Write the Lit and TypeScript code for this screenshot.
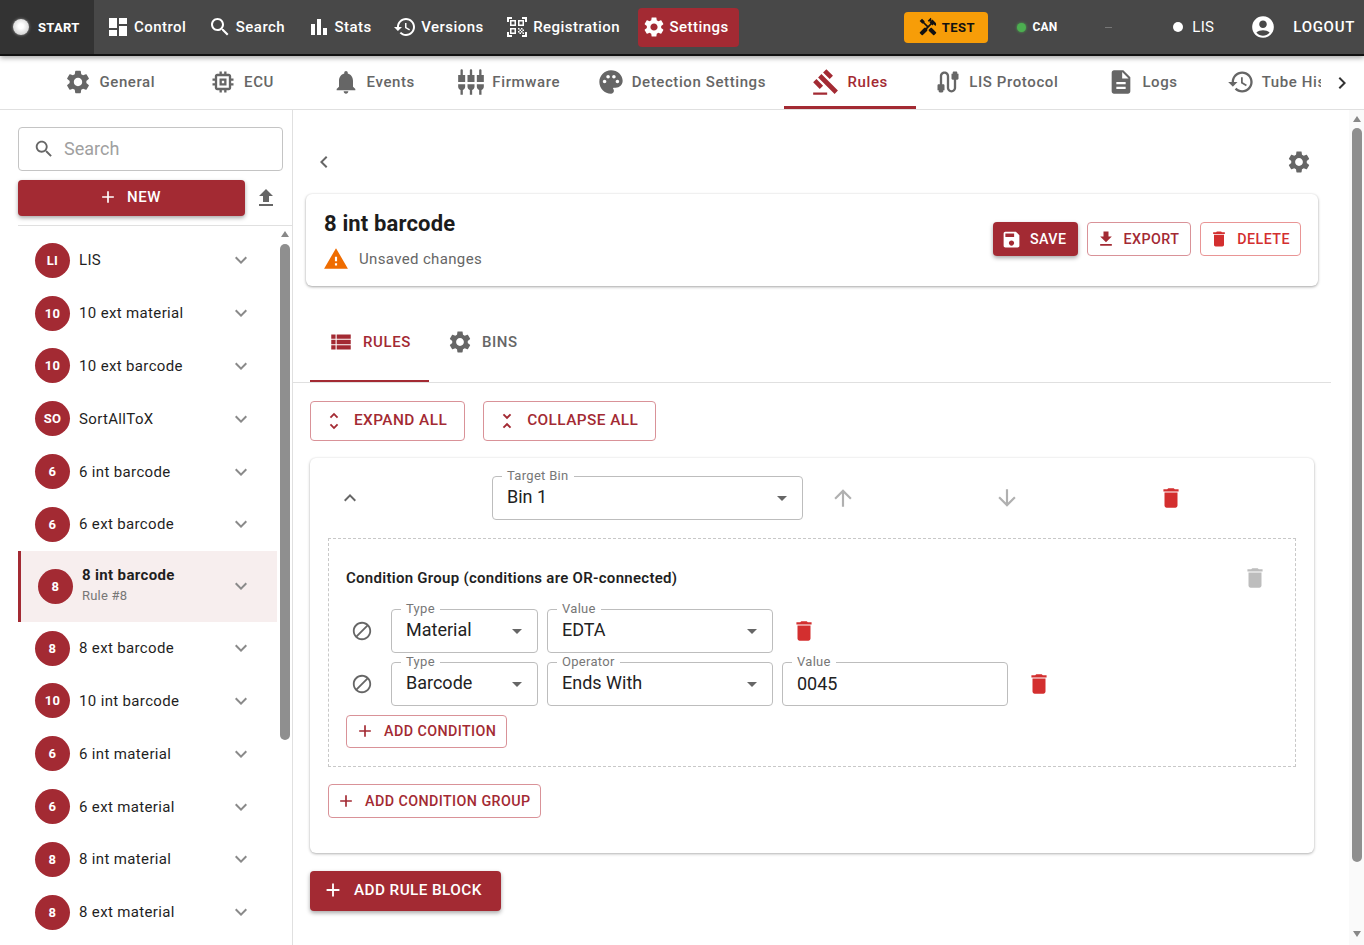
import { LitElement, html, css } from "lit";
import { customElement } from "lit/decorators.js";

const P = {
  gear: "M19.14 12.94c.04-.3.06-.61.06-.94 0-.32-.02-.64-.07-.94l2.03-1.58c.18-.14.23-.41.12-.61l-1.92-3.32c-.12-.22-.37-.29-.59-.22l-2.39.96c-.5-.38-1.03-.7-1.62-.94l-.36-2.54c-.04-.24-.24-.41-.48-.41h-3.84c-.24 0-.43.17-.47.41l-.36 2.54c-.59.24-1.13.57-1.62.94l-2.39-.96c-.22-.08-.47 0-.59.22L2.74 8.87c-.12.21-.08.47.12.61l2.03 1.58c-.05.3-.09.63-.09.94s.02.64.07.94l-2.03 1.58c-.18.14-.23.41-.12.61l1.92 3.32c.12.22.37.29.59.22l2.39-.96c.5.38 1.03.7 1.62.94l.36 2.54c.05.24.24.41.48.41h3.84c.24 0 .44-.17.47-.41l.36-2.54c.59-.24 1.13-.56 1.62-.94l2.39.96c.22.08.47 0 .59-.22l1.92-3.32c.12-.22.07-.47-.12-.61l-2.01-1.58zM12 15.6c-1.98 0-3.6-1.62-3.6-3.6s1.62-3.6 3.6-3.6 3.6 1.62 3.6 3.6-1.62 3.6-3.6 3.6z",
  dash: "M3 13h8V3H3v10zm0 8h8v-6H3v6zm10 0h8V11h-8v10zm0-18v6h8V3h-8z",
  search: "M15.5 14h-.79l-.28-.27C15.41 12.59 16 11.11 16 9.5 16 5.91 13.09 3 9.5 3S3 5.91 3 9.5 5.91 16 9.5 16c1.61 0 3.09-.59 4.23-1.57l.27.28v.79l5 4.99L20.49 19l-4.99-5zm-6 0C7.01 14 5 11.99 5 9.5S7.01 5 9.5 5 14 7.01 14 9.5 11.99 14 9.5 14z",
  bars: "M4 9h4v11H4zM16 13h4v7h-4zM10 4h4v16h-4z",
  history: "M13 3c-4.97 0-9 4.03-9 9H1l3.89 3.89.07.14L9 12H6c0-3.87 3.13-7 7-7s7 3.13 7 7-3.13 7-7 7c-1.93 0-3.68-.79-4.94-2.06l-1.42 1.42C8.27 19.99 10.51 21 13 21c4.97 0 9-4.03 9-9s-4.03-9-9-9zm-1 5v5l4.28 2.54.72-1.21-3.5-2.08V8H12z",
  qr: "M9.5 6.5v3h-3v-3h3M11 5H5v6h6V5zm-1.5 9.5v3h-3v-3h3M11 13H5v6h6v-6zm6.5-6.5v3h-3v-3h3M19 5h-6v6h6V5zm-6 8h1.5v1.5H13V13zm1.5 1.5H16V16h-1.5v-1.5zM16 13h1.5v1.5H16V13zm-3 3h1.5v1.5H13V16zm1.5 1.5H16V19h-1.5v-1.5zM16 16h1.5v1.5H16V16zm1.5-1.5H19V16h-1.5v-1.5zm0 3H19V19h-1.5v-1.5zM22 7h-2V4h-3V2h5v5zm0 15v-5h-2v3h-3v2h5zM2 22h5v-2H4v-3H2v5zM2 2v5h2V4h3V2H2z",
  handy: "m21.67 18.17-5.3-5.3h-.99l-2.54 2.54v.99l5.3 5.3c.39.39 1.02.39 1.41 0l2.12-2.12c.39-.38.39-1.02 0-1.41zM17.34 10.19l1.41-1.41 2.12 2.12c1.17-1.17 1.17-3.07 0-4.24l-3.54-3.54-1.41 1.41V1.71l-.7-.71-3.54 3.54.71.71h2.83l-1.41 1.41 1.06 1.06-2.89 2.89-4.13-4.13V5.06L4.83 2.04 2 4.87 5.03 7.9h1.41l4.13 4.13-.85.85H7.6l-5.3 5.3c-.39.39-.39 1.02 0 1.41l2.12 2.12c.39.39 1.02.39 1.41 0l5.3-5.3v-2.12l5.15-5.15 1.06 1.05z",
  account: "M12 2C6.48 2 2 6.48 2 12s4.48 10 10 10 10-4.48 10-10S17.52 2 12 2zm0 4c1.93 0 3.5 1.57 3.5 3.5S13.93 13 12 13s-3.5-1.57-3.5-3.5S10.07 6 12 6zm0 14c-2.03 0-4.43-.82-6.14-2.88C7.55 15.8 9.68 15 12 15s4.45.8 6.14 2.12C16.43 19.18 14.03 20 12 20z",
  memory: "M15 9H9v6h6V9zm-2 4h-2v-2h2v2zm8-2V9h-2V7c0-1.1-.9-2-2-2h-2V3h-2v2h-2V3H9v2H7c-1.1 0-2 .9-2 2v2H3v2h2v2H3v2h2v2c0 1.1.9 2 2 2h2v2h2v-2h2v2h2v-2h2c1.1 0 2-.9 2-2v-2h2v-2h-2v-2h2zm-4 6H7V7h10v10z",
  bell: "M12 22c1.1 0 2-.9 2-2h-4c0 1.1.89 2 2 2zm6-6v-5c0-3.07-1.64-5.64-4.5-6.32V4c0-.83-.67-1.5-1.5-1.5s-1.5.67-1.5 1.5v.68C7.63 5.36 6 7.92 6 11v5l-2 2v1h16v-1l-2-2z",
  composite: "M5 2c0-.55-.45-1-1-1s-1 .45-1 1v4H1v6h6V6H5V2zm4 14c0 1.3.84 2.4 2 2.82V23h2v-4.18c1.16-.41 2-1.51 2-2.82v-2H9v2zm-8 0c0 1.3.84 2.4 2 2.82V23h2v-4.18C6.16 18.4 7 17.3 7 16v-2H1v2zM21 6V2c0-.55-.45-1-1-1s-1 .45-1 1v4h-2v6h6V6h-2zm-8-4c0-.55-.45-1-1-1s-1 .45-1 1v4H9v6h6V6h-2V2zm4 14c0 1.3.84 2.4 2 2.82V23h2v-4.18c1.16-.41 2-1.51 2-2.82v-2h-6v2z",
  palette: "M12 2C6.49 2 2 6.49 2 12s4.49 10 10 10c1.38 0 2.5-1.12 2.5-2.5 0-.61-.23-1.2-.64-1.67-.08-.1-.13-.21-.13-.33 0-.28.22-.5.5-.5H16c3.31 0 6-2.69 6-6 0-4.96-4.49-9-10-9zm5.5 11c-.83 0-1.5-.67-1.5-1.5s.67-1.5 1.5-1.5 1.5.67 1.5 1.5-.67 1.5-1.5 1.5zm-3-4c-.83 0-1.5-.67-1.5-1.5S13.67 6 14.5 6s1.5.67 1.5 1.5S15.33 9 14.5 9zM5 11.5c0-.83.67-1.5 1.5-1.5s1.5.67 1.5 1.5S7.33 13 6.5 13 5 12.33 5 11.5zm6-4c0 .83-.67 1.5-1.5 1.5S8 8.33 8 7.5 8.67 6 9.5 6s1.5.67 1.5 1.5z",
  gavel: "M1 21h12v2H1v-2zM5.245 8.07l2.83-2.827 14.14 14.142-2.828 2.828L5.245 8.07zM12.32 1l5.657 5.656-2.83 2.83-5.654-5.66L12.32 1zM3.825 9.485l5.657 5.657-2.828 2.828-5.657-5.657 2.828-2.828z",
  cable: "M20 5V4c0-.55-.45-1-1-1h-2c-.55 0-1 .45-1 1v1h-1v4c0 .55.45 1 1 1h1v7c0 1.1-.9 2-2 2s-2-.9-2-2V7c0-2.21-1.79-4-4-4S5 4.79 5 7v7H4c-.55 0-1 .45-1 1v4h1v1c0 .55.45 1 1 1h2c.55 0 1-.45 1-1v-1h1v-4c0-.55-.45-1-1-1H7V7c0-1.1.9-2 2-2s2 .9 2 2v10c0 2.21 1.79 4 4 4s4-1.79 4-4v-7h1c.55 0 1-.45 1-1V5h-1z",
  doc: "M14 2H6c-1.1 0-1.99.9-1.99 2L4 20c0 1.1.89 2 1.99 2H18c1.1 0 2-.9 2-2V8l-6-6zm2 16H8v-2h8v2zm0-4H8v-2h8v2zm-3-5V3.5L18.5 9H13z",
  right: "M10 6 8.59 7.41 13.17 12l-4.58 4.59L10 18l6-6z",
  left: "M15.41 7.41 14 6l-6 6 6 6 1.41-1.41L10.83 12z",
  more: "M16.59 8.59 12 13.17 7.41 8.59 6 10l6 6 6-6z",
  less: "m12 8-6 6 1.41 1.41L12 10.83l4.59 4.58L18 14z",
  add: "M19 13h-6v6h-2v-6H5v-2h6V5h2v6h6v2z",
  upload: "M9 16h6v-6h4l-7-7-7 7h4zm-4 2h14v2H5z",
  download: "M19 9h-4V3H9v6H5l7 7 7-7zM5 18v2h14v-2H5z",
  save: "M17 3H5c-1.11 0-2 .9-2 2v14c0 1.1.89 2 2 2h14c1.1 0 2-.9 2-2V7l-4-4zm-5 16c-1.66 0-3-1.34-3-3s1.34-3 3-3 3 1.34 3 3-1.34 3-3 3zm3-10H5V5h10v4z",
  del: "M6 19c0 1.1.9 2 2 2h8c1.1 0 2-.9 2-2V7H6v12zM19 4h-3.5l-1-1h-5l-1 1H5v2h14V4z",
  warn: "M1 21h22L12 2 1 21zm12-3h-2v-2h2v2zm0-4h-2v-4h2v4z",
  list: "M3 14h4v-4H3v4zm0 5h4v-4H3v4zM3 9h4V5H3v4zm5 5h13v-4H8v4zm0 5h13v-4H8v4zM8 5v4h13V5H8z",
  unfoldMore: "M12 5.83 15.17 9l1.41-1.41L12 3 7.41 7.59 8.83 9 12 5.83zm0 12.34L8.83 15l-1.41 1.41L12 21l4.59-4.59L15.17 15 12 18.17z",
  unfoldLess: "M7.41 18.59 8.83 20 12 16.83 15.17 20l1.41-1.41L12 14l-4.59 4.59zm9.18-13.18L15.17 4 12 7.17 8.83 4 7.41 5.41 12 10l4.59-4.59z",
  up: "m4 12 1.41 1.41L11 7.83V20h2V7.83l5.58 5.59L20 12l-8-8-8 8z",
  down: "m20 12-1.41-1.41L13 16.17V4h-2v12.17l-5.58-5.59L4 12l8 8 8-8z",
  block: "M12 2C6.48 2 2 6.48 2 12s4.48 10 10 10 10-4.48 10-10S17.52 2 12 2zM4 12c0-4.42 3.58-8 8-8 1.85 0 3.55.63 4.9 1.69L5.69 16.9C4.63 15.55 4 13.85 4 12zm8 8c-1.85 0-3.55-.63-4.9-1.69L18.31 7.1C19.37 8.45 20 10.15 20 12c0 4.42-3.58 8-8 8z",
  drop: "M7 10l5 5 5-5z",
};

const ic = (d: string, cls = "") =>
  html`<svg class="ic ${cls}" viewBox="0 0 24 24"><path d=${d}></path></svg>`;

const NAV: [string, string, boolean][] = [
  ["Control", P.dash, false],
  ["Search", P.search, false],
  ["Stats", P.bars, false],
  ["Versions", P.history, false],
  ["Registration", P.qr, false],
  ["Settings", P.gear, true],
];

const TABS: [string, string, boolean][] = [
  ["General", P.gear, false],
  ["ECU", P.memory, false],
  ["Events", P.bell, false],
  ["Firmware", P.composite, false],
  ["Detection Settings", P.palette, false],
  ["Rules", P.gavel, true],
  ["LIS Protocol", P.cable, false],
  ["Logs", P.doc, false],
  ["Tube History", P.history, false],
];

const RULES: [string, string][] = [
  ["LI", "LIS"],
  ["10", "10 ext material"],
  ["10", "10 ext barcode"],
  ["SO", "SortAllToX"],
  ["6", "6 int barcode"],
  ["6", "6 ext barcode"],
  ["8", "8 int barcode"],
  ["8", "8 ext barcode"],
  ["10", "10 int barcode"],
  ["6", "6 int material"],
  ["6", "6 ext material"],
  ["8", "8 int material"],
  ["8", "8 ext material"],
];

@customElement("app-root")
export class AppRoot extends LitElement {
  static styles = css`
    :host {
      display: block;
      width: 1364px;
      height: 945px;
      overflow: hidden;
      background: #fff;
      font-family: Roboto, "Liberation Sans", sans-serif;
      color: #1f1f1f;
    }
    * { box-sizing: border-box; }
    .ic { width: 24px; height: 24px; fill: currentColor; flex: none; display: block; }
    .s20 { width: 20px; height: 20px; }
    .s21 { width: 21px; height: 21px; }
    .s22 { width: 22px; height: 22px; }
    .s26 { width: 26px; height: 26px; }
    .s28 { width: 28px; height: 28px; }

    /* header */
    .header {
      height: 56px;
      background: #484848;
      border-bottom: 2px solid #111;
      box-shadow: 0 2px 5px rgba(0, 0, 0, 0.35);
      display: flex;
      align-items: center;
      color: #fff;
      position: relative;
      z-index: 2;
    }
    .start {
      width: 94px;
      height: 54px;
      background: #333;
      display: flex;
      align-items: center;
      padding-left: 13px;
      gap: 9px;
      font-size: 13px;
      font-weight: 700;
      letter-spacing: 0.3px;
      margin-right: 8px;
    }
    .lamp {
      width: 16px;
      height: 16px;
      border-radius: 50%;
      background: radial-gradient(circle at 50% 45%, #fff 20%, #c8c8c8 90%);
      box-shadow: 0 0 3px rgba(255, 255, 255, 0.5);
    }
    .nav {
      height: 39px;
      display: flex;
      align-items: center;
      gap: 4px;
      padding: 0 10px 0 4px;
      margin-right: 7.4px;
      font-size: 15px;
      font-weight: 500;
      letter-spacing: 0.47px;
      border-radius: 4px;
      white-space: nowrap;
    }
    .nav.on { background: #a32a33; }
    .test {
      margin-left: auto;
      width: 84px;
      height: 31px;
      background: #f79d08;
      border-radius: 4px;
      color: #111;
      font-size: 13px;
      font-weight: 700;
      letter-spacing: 0.4px;
      display: flex;
      align-items: center;
      justify-content: center;
      gap: 4px;
    }
    .can {
      margin-left: 29px;
      display: flex;
      align-items: center;
      gap: 6px;
      font-size: 12px;
      font-weight: 700;
      letter-spacing: 0.2px;
    }
    .cdot { width: 9px; height: 9px; border-radius: 50%; background: #4caf50; box-shadow: 0 0 3px #4caf50; }
    .dash { margin-left: 48px; width: 7px; height: 1px; background: #777; }
    .lis { margin-left: 61px; display: flex; align-items: center; gap: 9px; font-size: 15px; letter-spacing: 0.3px; }
    .ldot { width: 10px; height: 10px; border-radius: 50%; background: #fff; }
    .acct { margin-left: 36px; }
    .logout { margin-left: 17px; margin-right: 9px; font-size: 15px; font-weight: 500; letter-spacing: 0.7px; }

    /* tabs */
    .tabs {
      height: 54px;
      border-bottom: 1px solid #e0e0e0;
      display: flex;
      position: relative;
    }
    .tabscroll { display: flex; width: 1321px; overflow: hidden; padding-left: 44px; }
    .tab {
      height: 53px;
      padding: 2px 18.3px 0;
      min-width: 131.7px;
      display: flex;
      align-items: center;
      justify-content: center;
      gap: 7px;
      font-size: 15px;
      font-weight: 500;
      letter-spacing: 0.6px;
      color: #666;
      white-space: nowrap;
      flex: none;
      border-bottom: 3px solid transparent;
    }
    .tab.on { color: #a32a33; border-bottom-color: #a32a33; }
    .tabnext { margin-left: 9px; height: 53px; display: flex; align-items: center; color: #333; }

    /* body */
    .body { display: flex; height: 835px; }
    .side { width: 293px; border-right: 1px solid #e0e0e0; flex: none; padding-top: 17px; overflow: hidden; }
    .sfield {
      margin-left: 18px;
      width: 265px;
      height: 44px;
      border: 1px solid #c4c4c4;
      border-radius: 4px;
      display: flex;
      align-items: center;
      padding-left: 14px;
      gap: 9px;
      font-size: 18px;
      color: #a0a0a0;
    }
    .sfield .ic { color: #666; }
    .sfield span { padding-bottom: 2px; }
    .newrow { margin: 9px 0 9px 18px; display: flex; align-items: center; gap: 9px; }
    .btn.new {
      width: 227px;
      height: 36px;
      justify-content: center;
      gap: 9px;
      padding: 0 4px 2px 0;
      font-size: 15px;
      letter-spacing: 0.5px;
    }
    .upl { color: #666; }
    .listwrap { margin-left: 18px; border-top: 1px solid #e0e0e0; display: flex; gap: 3px; }
    .list { width: 259px; flex: none; padding-top: 8px; }
    .rule {
      height: 52.8px;
      display: flex;
      align-items: center;
      padding: 0 24px 0 17px;
      font-size: 15px;
      letter-spacing: 0.35px;
    }
    .rule.on { height: 71px; background: #f7eeee; border-left: 3px solid #a32a33; }
    .av {
      width: 35px;
      height: 35px;
      border-radius: 50%;
      background: #a32a33;
      color: #fff;
      font-size: 13px;
      font-weight: 700;
      display: flex;
      align-items: center;
      justify-content: center;
      flex: none;
      margin-right: 9px;
    }
    .rtext { flex: 1; white-space: nowrap; }
    .rule.on .rtext { padding-bottom: 4px; }
    .rtitle { font-weight: 700; }
    .rsub { font-size: 13px; color: #777; margin-top: 4px; letter-spacing: 0.2px; }
    .rule .ic { color: #8a8a8a; }
    .bar { width: 10px; flex: none; display: flex; flex-direction: column; align-items: center; }
    .up { margin-top: 5px; width: 0; height: 0; border: 4px solid transparent; border-top: 0; border-bottom: 6px solid #888; }
    .dn { margin-top: 69px; width: 0; height: 0; border: 4px solid transparent; border-bottom: 0; border-top: 6px solid #888; }
    .thumb { width: 10px; background: #8f8f8f; border-radius: 5px; margin-top: 7px; height: 496px; }

    .main { width: 1038px; flex: none; }
    .top {
      margin-top: 38px;
      height: 28px;
      padding: 0 19px;
      display: flex;
      align-items: center;
      justify-content: space-between;
      color: #666;
    }
    .card {
      margin: 18px 0 0 13px;
      width: 1012px;
      height: 92px;
      border-radius: 6px;
      box-shadow: 0 1px 3px rgba(0, 0, 0, 0.35), 0 0 2px rgba(0, 0, 0, 0.06);
      display: flex;
      align-items: center;
      justify-content: space-between;
      padding: 0 17px 0 18px;
    }
    .cl { padding-top: 2px; }
    .h1 { font-size: 22px; font-weight: 700; letter-spacing: 0.15px; color: #1c1c1c; margin-bottom: 8px; line-height: 28px; }
    .unsaved { display: flex; align-items: center; gap: 10px; font-size: 15px; color: #666; letter-spacing: 0.35px; }
    .unsaved .ic { color: #ef6c00; margin-left: -1px; }
    .actions { display: flex; gap: 9px; padding-bottom: 2px; }
    .btn {
      display: flex;
      align-items: center;
      gap: 8px;
      border-radius: 4px;
      font-size: 14.3px;
      font-weight: 500;
      letter-spacing: 0.42px;
      white-space: nowrap;
    }
    .ol { border: 1px solid #d99298; color: #a32a33; background: #fff; }
    .ol.red { color: #d32f2f; border-color: #e99595; }
    .fill { background: #a32a33; color: #fff; box-shadow: 0 2px 4px rgba(0, 0, 0, 0.35); }
    .a { height: 34px; padding: 0 11px 0 8px; }
    .a.red { padding-right: 10px; }

    .subtabs { margin-top: 24px; height: 73px; border-bottom: 1px solid #e0e0e0; padding-left: 17px; display: flex; }
    .st {
      height: 72px;
      display: flex;
      align-items: center;
      gap: 9px;
      padding: 0 18px 6px;
      font-size: 15px;
      font-weight: 500;
      letter-spacing: 0.6px;
      color: #666;
      border-bottom: 2px solid transparent;
    }
    .st.on { color: #a32a33; border-bottom-color: #a32a33; }
    .toolbar { margin: 18px 0 0 17px; display: flex; gap: 18px; }
    .tb { height: 40px; padding: 0 17px 2px 12px; font-size: 15.4px; gap: 9px; }
    .tb .ic { margin-top: 2px; }

    .block {
      margin: 17px 0 0 17px;
      width: 1004px;
      height: 395px;
      border-radius: 6px;
      box-shadow: 0 1px 3px rgba(0, 0, 0, 0.3), 0 0 2px rgba(0, 0, 0, 0.05);
      padding: 18px 18px 0;
    }
    .bhead { display: flex; align-items: center; height: 44px; color: #666; }
    .cell { width: 80px; display: flex; justify-content: center; flex: none; }
    .cell.ch { width: 44px; margin-right: 120px; }
    .cell.gap { margin-left: 84px; }
    .cell.dim { color: #b0b0b0; }
    .trash { color: #d32f2f; }
    .field {
      position: relative;
      height: 44px;
      border: 1px solid #bdbdbd;
      border-radius: 4px;
      display: flex;
      align-items: center;
      padding: 0 8px 0 14px;
      font-size: 18px;
      color: #222;
      flex: none;
    }
    .field .val { flex: 1; padding-bottom: 4px; }
    .field .val.txt { padding-bottom: 2px; }
    .field .ic { color: #666; }
    .lab {
      position: absolute;
      top: -9px;
      left: 9px;
      background: #fff;
      padding: 0 5px;
      font-size: 13px;
      line-height: 15px;
      letter-spacing: 0.3px;
      color: #777;
    }
    .w311 { width: 311px; }
    .w147 { width: 147px; }
    .w226 { width: 226px; }
    .group {
      margin-top: 18px;
      height: 229px;
      border: 1px dashed #c8c8c8;
      padding: 26px 0 0 17px;
    }
    .gtitle {
      display: flex;
      align-items: center;
      justify-content: space-between;
      height: 26px;
      padding-right: 27px;
      font-size: 15px;
      font-weight: 600;
      letter-spacing: 0.28px;
      margin-bottom: 18px;
    }
    .gtitle .ic { color: #bdbdbd; }
    .cond { display: flex; align-items: center; gap: 9px; margin-bottom: 9px; }
    .ban { width: 32px; margin-right: 4px; display: flex; justify-content: center; color: #666; }
    .ctrash { margin-left: 9px; color: #d32f2f; }
    .addc { height: 33px; width: 161px; padding: 0 0 1px 8px; gap: 9px; }
    .addg { margin-top: 17px; height: 34px; width: 213px; padding-left: 7px; gap: 9px; }
    .addr { margin: 18px 0 0 17px; height: 40px; width: 191px; padding: 0 0 2px 12px; gap: 10px; font-size: 15.3px; }

    .pagebar { margin-left: 18px; width: 15px; background: #fafafa; display: flex; flex-direction: column; align-items: center; }
    .pagebar .up { margin-top: 6px; }
    .pagebar .thumb { margin-top: 6px; height: 734px; }
  `;

  render() {
    return html`
      <div class="header">
        <div class="start"><span class="lamp"></span>START</div>
        ${NAV.map(
          ([t, d, on]) => html`<div class="nav ${on ? "on" : ""}">${ic(d)}${t}</div>`
        )}
        <div class="test">${ic(P.handy, "s20")}TEST</div>
        <div class="can"><span class="cdot"></span>CAN</div>
        <div class="dash"></div>
        <div class="lis"><span class="ldot"></span>LIS</div>
        <div class="acct">${ic(P.account, "s26")}</div>
        <div class="logout">LOGOUT</div>
      </div>
      <div class="tabs">
        <div class="tabscroll">
          ${TABS.map(([t, d, on]) => html`<div class="tab ${on ? "on" : ""}">${ic(d, "s28")}${t}</div>`)}
        </div>
        <div class="tabnext">${ic(P.right)}</div>
      </div>
      <div class="body">
        <div class="side">
          <div class="sfield">${ic(P.search, "s22")}<span>Search</span></div>
          <div class="newrow">
            <div class="btn fill new">${ic(P.add, "s20")}NEW</div>
            <div class="upl">${ic(P.upload)}</div>
          </div>
          <div class="listwrap">
            <div class="list">
              ${RULES.map(([a, t], i) =>
                i === 6
                  ? html`<div class="rule on">
                      <div class="av">${a}</div>
                      <div class="rtext">
                        <div class="rtitle">${t}</div>
                        <div class="rsub">Rule #8</div>
                      </div>
                      ${ic(P.more)}
                    </div>`
                  : html`<div class="rule">
                      <div class="av">${a}</div>
                      <div class="rtext">${t}</div>
                      ${ic(P.more)}
                    </div>`
              )}
            </div>
            <div class="bar"><div class="up"></div><div class="thumb"></div></div>
          </div>
        </div>
        <div class="main">
          <div class="top">${ic(P.left)}${ic(P.gear, "s26")}</div>
          <div class="card">
            <div class="cl">
              <div class="h1">8 int barcode</div>
              <div class="unsaved">${ic(P.warn, "s26")}Unsaved changes</div>
            </div>
            <div class="actions">
              <div class="btn fill a">${ic(P.save, "s21")}SAVE</div>
              <div class="btn ol a">${ic(P.download, "s20")}EXPORT</div>
              <div class="btn ol red a">${ic(P.del, "s20")}DELETE</div>
            </div>
          </div>
          <div class="subtabs">
            <div class="st on">${ic(P.list, "s26")}RULES</div>
            <div class="st">${ic(P.gear, "s26")}BINS</div>
          </div>
          <div class="toolbar">
            <div class="btn ol tb">${ic(P.unfoldMore, "s22")}EXPAND ALL</div>
            <div class="btn ol tb">${ic(P.unfoldLess, "s22")}COLLAPSE ALL</div>
          </div>
          <div class="block">
            <div class="bhead">
              <div class="cell ch">${ic(P.less)}</div>
              <div class="field w311">
                <span class="lab">Target Bin</span><span class="val">Bin 1</span>${ic(P.drop)}
              </div>
              <div class="cell dim">${ic(P.up, "s26")}</div>
              <div class="cell gap dim">${ic(P.down, "s26")}</div>
              <div class="cell gap trash">${ic(P.del, "s26")}</div>
            </div>
            <div class="group">
              <div class="gtitle">Condition Group (conditions are OR-connected)${ic(P.del, "s26")}</div>
              <div class="cond">
                <div class="ban">${ic(P.block, "s22")}</div>
                <div class="field w147"><span class="lab">Type</span><span class="val">Material</span>${ic(P.drop)}</div>
                <div class="field w226"><span class="lab">Value</span><span class="val">EDTA</span>${ic(P.drop)}</div>
                <div class="ctrash">${ic(P.del, "s26")}</div>
              </div>
              <div class="cond">
                <div class="ban">${ic(P.block, "s22")}</div>
                <div class="field w147"><span class="lab">Type</span><span class="val">Barcode</span>${ic(P.drop)}</div>
                <div class="field w226"><span class="lab">Operator</span><span class="val">Ends With</span>${ic(P.drop)}</div>
                <div class="field w226"><span class="lab">Value</span><span class="val txt">0045</span></div>
                <div class="ctrash">${ic(P.del, "s26")}</div>
              </div>
              <div class="btn ol addc">${ic(P.add, "s20")}ADD CONDITION</div>
            </div>
            <div class="btn ol addg">${ic(P.add, "s20")}ADD CONDITION GROUP</div>
          </div>
          <div class="btn fill addr">${ic(P.add, "s22")}ADD RULE BLOCK</div>
        </div>
        <div class="pagebar">
          <div class="up"></div>
          <div class="thumb"></div>
          <div class="dn"></div>
        </div>
      </div>
    `;
  }
}
